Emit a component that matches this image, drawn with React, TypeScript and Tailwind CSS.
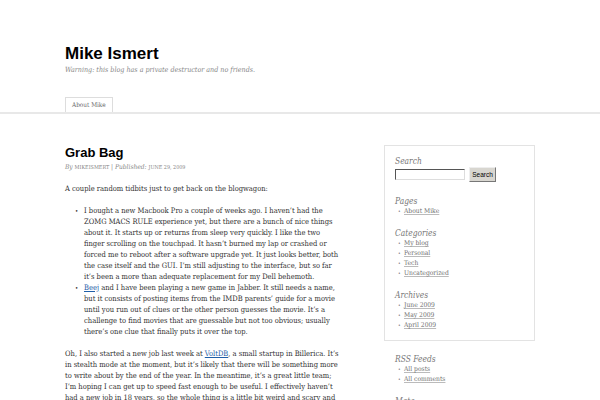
const serif = "font-['DejaVu_Serif_Condensed','DejaVu_Serif',serif]";

const sidebarBox = [
  { title: "Pages", items: ["About Mike"] },
  { title: "Categories", items: ["My blog", "Personal", "Tech", "Uncategorized"] },
  { title: "Archives", items: ["June 2009", "May 2009", "April 2009"] },
];

function Widget({ title, items, top = "mt-[12px]" }: { title: string; items: string[]; top?: string }) {
  return (
    <div className={top}>
      <h3 className="text-[8.4px] italic leading-[10px] text-[#777]">{title}</h3>
      <ul>
        {items.map((item) => (
          <li key={item} className="flex items-center text-[6.7px] leading-[10px] text-[#707070]">
            <span className="w-[9px] pl-[3px] text-[5px]">•</span>
            <a href="#" className="underline decoration-[#bbb]">
              {item}
            </a>
          </li>
        ))}
      </ul>
    </div>
  );
}

function Bullet({ children }: { children: React.ReactNode }) {
  return (
    <li className="flex">
      <span className="w-[9px] shrink-0 text-[6px]">•</span>
      <div>{children}</div>
    </li>
  );
}

export default function App() {
  return (
    <div className={`min-h-screen bg-white text-[#333] ${serif}`}>
      <header className="px-[65px] pt-[44px]">
        <h1 className="font-['Liberation_Sans',Arial,sans-serif] text-[17px] font-bold leading-[20px] text-black">
          Mike Ismert
        </h1>
        <p className="mt-[1px] text-[7.1px] italic leading-[10px] text-[#888]">
          Warning: this blog has a private destructor and no friends.
        </p>
      </header>

      <nav className="mt-[22px] border-b-2 border-[#e8e8e8]">
        <div className="flex px-[65px]">
          <a
            href="#"
            className="border border-b-0 border-[#ddd] bg-white px-[6px] pt-[3px] pb-[2px] text-[6.4px] leading-[9px] text-[#666]"
          >
            About Mike
          </a>
        </div>
      </nav>

      <div className="flex px-[65px] pt-[31px]">
        <main className="w-[275px] text-[7.5px] leading-[11px]">
          <h2 className="font-['Liberation_Sans',Arial,sans-serif] text-[13px] font-bold leading-[16px] text-black">
            Grab Bag
          </h2>
          <p className="mt-[1px] text-[6.6px] leading-[10px] text-[#888]">
            <span className="italic">By</span> <span className="text-[5.4px] uppercase">mikeismert</span> |{" "}
            <span className="italic">Published:</span> <span className="text-[5.4px] uppercase">June 29, 2009</span>
          </p>

          <p className="mt-[11px] whitespace-nowrap">A couple random tidbits just to get back on the blogwagon:</p>

          <ul className="mt-[11px] pl-[10px] whitespace-nowrap">
            <Bullet>
              I bought a new Macbook Pro a couple of weeks ago. I haven’t had the
              <br />
              ZOMG MACS RULE experience yet, but there are a bunch of nice things
              <br />
              about it. It starts up or returns from sleep very quickly. I like the two
              <br />
              finger scrolling on the touchpad. It hasn’t burned my lap or crashed or
              <br />
              forced me to reboot after a software upgrade yet. It just looks better, both
              <br />
              the case itself and the GUI. I’m still adjusting to the interface, but so far
              <br />
              it’s been a more than adequate replacement for my Dell behemoth.
            </Bullet>
            <Bullet>
              <a href="#" className="text-[#1f5fa8] underline">
                Beej
              </a>{" "}
              and I have been playing a new game in Jabber. It still needs a name,
              <br />
              but it consists of posting items from the IMDB parents’ guide for a movie
              <br />
              until you run out of clues or the other person guesses the movie. It’s a
              <br />
              challenge to find movies that are guessable but not too obvious; usually
              <br />
              there’s one clue that finally puts it over the top.
            </Bullet>
          </ul>

          <p className="mt-[11px] whitespace-nowrap">
            Oh, I also started a new job last week at{" "}
            <a href="#" className="text-[#1f5fa8] underline">
              VoltDB
            </a>
            , a small startup in Billerica. It’s
            <br />
            in stealth mode at the moment, but it’s likely that there will be something more
            <br />
            to write about by the end of the year. In the meantime, it’s a great little team;
            <br />
            I’m hoping I can get up to speed fast enough to be useful. I effectively haven’t
            <br />
            had a new job in 18 years, so the whole thing is a little bit weird and scary and
          </p>
        </main>

        <aside className="ml-[44px] w-[151px]">
          <div className="border border-[#e3e3e3] px-[10px] pt-[10px] pb-[10px]">
            <h3 className="text-[8.4px] italic leading-[10px] text-[#777]">Search</h3>
            <div className="mt-[1px] flex h-[15px] items-center">
              <input
                type="text"
                className="h-[11px] w-[70px] border border-t-[#555] border-l-[#555] border-r-[#ddd] border-b-[#ddd] bg-white"
              />
              <button
                type="button"
                className="ml-[4px] h-[15px] w-[27px] border border-t-[#eee] border-l-[#eee] border-r-[#777] border-b-[#777] bg-[#d8d6d0] font-['Liberation_Sans',Arial,sans-serif] text-[6.5px] leading-[13px] text-black"
              >
                Search
              </button>
            </div>
            {sidebarBox.map((w, i) => (
              <Widget key={w.title} title={w.title} items={w.items} top={i === 0 ? "mt-[14px]" : "mt-[12px]"} />
            ))}
          </div>
          <div className="px-[11px]">
            <Widget title="RSS Feeds" items={["All posts", "All comments"]} top="mt-[13px]" />
            <Widget title="Meta" items={["Log in"]} />
          </div>
        </aside>
      </div>
    </div>
  );
}
